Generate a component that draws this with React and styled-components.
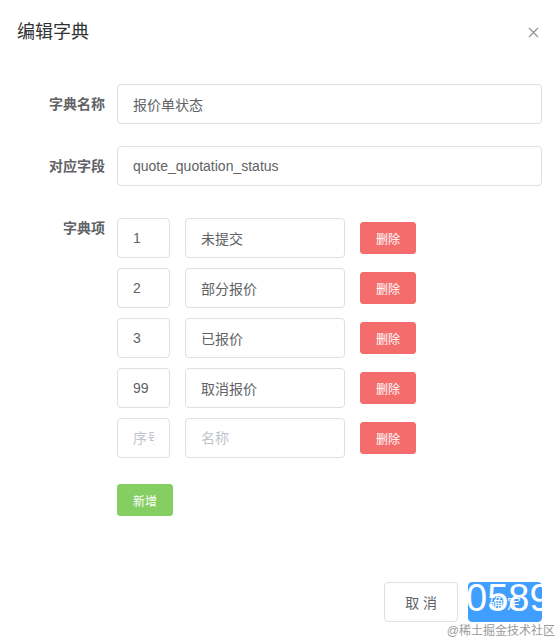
import React, { useState } from "react";
import styled, { createGlobalStyle } from "styled-components";

const GlobalStyle = createGlobalStyle`
  html, body {
    margin: 0;
    padding: 0;
    background: #fff;
  }
  body {
    font-family: "Liberation Sans", "Noto Sans CJK SC", sans-serif;
    color: #606266;
  }
  * {
    box-sizing: border-box;
  }
`;

const Dialog = styled.div`
  position: relative;
  width: 560px;
  overflow: hidden;
  background: #fff;
`;

const Header = styled.div`
  display: flex;
  align-items: center;
  justify-content: space-between;
  padding: 20px 21px 10px 17px;
`;

const Title = styled.span`
  font-size: 18px;
  line-height: 24px;
  color: #303133;
`;

const CloseButton = styled.button`
  display: flex;
  padding: 0;
  border: 0;
  background: none;
  cursor: pointer;
  color: #909399;
`;

const Body = styled.div`
  padding: 30px 18px 30px 17px;
`;

const FormItem = styled.div`
  display: flex;
  margin-bottom: 22px;
`;

const Label = styled.label`
  flex-shrink: 0;
  width: 100px;
  padding-right: 12px;
  text-align: right;
  font-size: 14px;
  font-weight: 700;
  line-height: 40px;
  color: #606266;
`;

const Content = styled.div`
  flex: 1;
  min-width: 0;
  min-height: 40px;
  display: flex;
  flex-direction: column;
  align-items: flex-start;
  justify-content: ${(p) => (p.$center ? "center" : "flex-start")};
`;

const Input = styled.input`
  width: ${(p) => p.$width || "100%"};
  height: 40px;
  padding: 0 15px;
  border: 1px solid #dcdfe6;
  border-radius: 4px;
  outline: none;
  background: #fff;
  font-family: inherit;
  font-size: 14px;
  color: #606266;

  &::placeholder {
    color: #c0c4cc;
  }
`;

const ItemRow = styled.div`
  display: flex;
  align-items: center;
  gap: 15px;
  margin-top: 10px;
`;

const SmallButton = styled.button`
  height: 32px;
  padding: 0 15px;
  border: 1px solid ${(p) => p.$bg};
  border-radius: 3px;
  background: ${(p) => p.$bg};
  color: #fff;
  font-family: inherit;
  font-size: 12px;
  cursor: pointer;
`;

const Footer = styled.div`
  display: flex;
  justify-content: flex-end;
  gap: 10px;
  padding: 10px 18px 20px;
`;

const Button = styled.button`
  height: 40px;
  padding: 0 20px;
  border: 1px solid ${(p) => (p.$primary ? "#409eff" : "#dcdfe6")};
  border-radius: 4px;
  background: ${(p) => (p.$primary ? "#409eff" : "#fff")};
  color: ${(p) => (p.$primary ? "#fff" : "#606266")};
  font-family: inherit;
  font-size: 14px;
  cursor: pointer;
`;

const MarkNumber = styled.div`
  position: absolute;
  left: 466px;
  top: 580px;
  font-family: "Liberation Sans", sans-serif;
  font-size: 38px;
  line-height: 36px;
  color: #fff;
  pointer-events: none;
`;

const MarkText = styled.div`
  position: absolute;
  right: 5px;
  bottom: 3px;
  font-size: 12px;
  line-height: 16px;
  color: #9b9b9b;
  text-shadow: 0 0 2px #fff;
  pointer-events: none;
`;

const initialItems = [
  { value: "1", label: "未提交" },
  { value: "2", label: "部分报价" },
  { value: "3", label: "已报价" },
  { value: "99", label: "取消报价" },
  { value: "", label: "" },
];

export default function App() {
  const [name, setName] = useState("报价单状态");
  const [field, setField] = useState("quote_quotation_status");
  const [items, setItems] = useState(initialItems);

  const update = (index, key, val) =>
    setItems(items.map((it, i) => (i === index ? { ...it, [key]: val } : it)));

  return (
    <>
      <GlobalStyle />
      <Dialog>
        <Header>
          <Title>编辑字典</Title>
          <CloseButton aria-label="close">
            <svg width="11" height="11" viewBox="0 0 11 11">
              <path d="M1 1 L10 10 M10 1 L1 10" stroke="currentColor" strokeWidth="1.2" fill="none" />
            </svg>
          </CloseButton>
        </Header>
        <Body>
          <FormItem>
            <Label>字典名称</Label>
            <Content>
              <Input value={name} onChange={(e) => setName(e.target.value)} />
            </Content>
          </FormItem>
          <FormItem>
            <Label>对应字段</Label>
            <Content>
              <Input value={field} onChange={(e) => setField(e.target.value)} />
            </Content>
          </FormItem>
          <FormItem>
            <Label>字典项</Label>
            <Content>
              {items.map((it, i) => (
                <ItemRow key={i}>
                  <Input
                    $width="53px"
                    placeholder="序号"
                    value={it.value}
                    onChange={(e) => update(i, "value", e.target.value)}
                  />
                  <Input
                    $width="160px"
                    placeholder="名称"
                    value={it.label}
                    onChange={(e) => update(i, "label", e.target.value)}
                  />
                  <SmallButton
                    $bg="#f56c6c"
                    onClick={() => setItems(items.filter((_, j) => j !== i))}
                  >
                    删除
                  </SmallButton>
                </ItemRow>
              ))}
            </Content>
          </FormItem>
          <FormItem>
            <Label />
            <Content $center>
              <SmallButton
                $bg="#85ce61"
                onClick={() => setItems([...items, { value: "", label: "" }])}
              >
                新增
              </SmallButton>
            </Content>
          </FormItem>
        </Body>
        <Footer>
          <Button>取 消</Button>
          <Button $primary>确 定</Button>
        </Footer>
        <MarkNumber>0589</MarkNumber>
        <MarkText>@稀土掘金技术社区</MarkText>
      </Dialog>
    </>
  );
}
